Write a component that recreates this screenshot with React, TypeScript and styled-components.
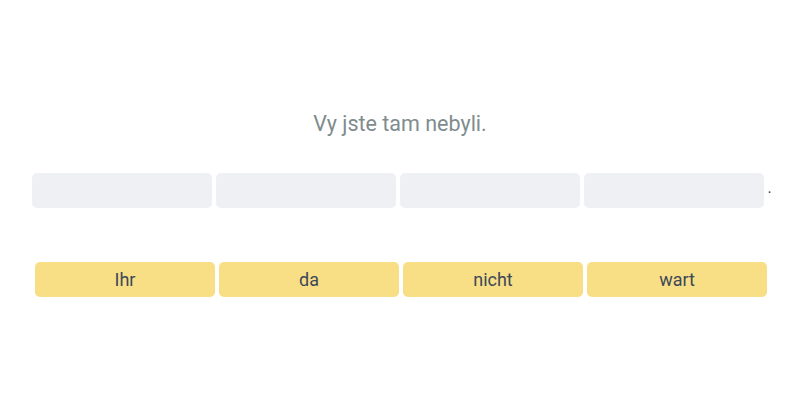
import React from "react";
import styled, { createGlobalStyle } from "styled-components";

const GlobalStyle = createGlobalStyle`
  body {
    margin: 0;
    background: #ffffff;
    font-family: Roboto, "Liberation Sans", sans-serif;
  }
`;

const Wrapper = styled.div`
  width: 800px;
  height: 400px;
  display: flex;
  flex-direction: column;
  align-items: center;
  padding-top: 112px;
  box-sizing: border-box;
`;
const Prompt = styled.div`
  font-size: 21.5px;
  line-height: 24px;
  color: #7f8c8d;
`;
const SlotRow = styled.div`
  display: flex;
  align-items: center;
  gap: 4px;
  margin-top: 37px;
  margin-left: 4px;
`;
const Slot = styled.div`
  width: 180px;
  height: 35px;
  border-radius: 5px;
  background: #eff0f4;
`;
const Period = styled.span`
  font-size: 16px;
  line-height: 16px;
  color: #34495e;
  margin-left: -1px;
  margin-bottom: 6px;
`;
const WordRow = styled.div`
  display: flex;
  gap: 4px;
  margin-top: 54px;
  margin-left: 2px;
`;
const Word = styled.button`
  width: 180px;
  height: 35px;
  border: none;
  border-radius: 5px;
  background: #f8df86;
  color: #3c4858;
  font-family: Roboto, "Liberation Sans", sans-serif;
  font-size: 18px;
  line-height: 35px;
  padding: 0;
  cursor: pointer;
`;

const words = ["Ihr", "da", "nicht", "wart"];

export default function App() {
  return (
    <Wrapper>
      <GlobalStyle />
      <Prompt>Vy jste tam nebyli.</Prompt>
      <SlotRow>
        {words.map((w) => (
          <Slot key={w} />
        ))}
        <Period>.</Period>
      </SlotRow>
      <WordRow>
        {words.map((w) => (
          <Word key={w}>{w}</Word>
        ))}
      </WordRow>
    </Wrapper>
  );
}
